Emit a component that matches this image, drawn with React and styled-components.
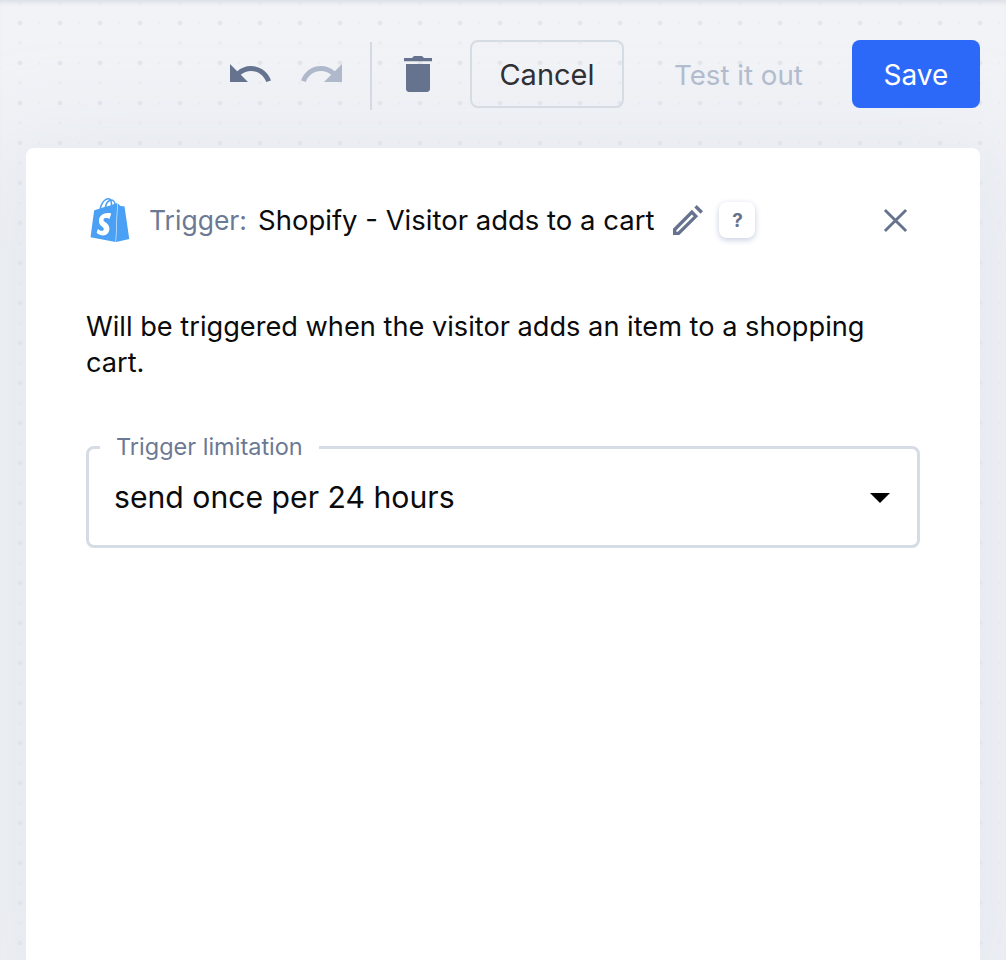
import React from "react";
import styled, { createGlobalStyle } from "styled-components";
import { SiShopify } from "react-icons/si";

const GlobalStyle = createGlobalStyle`
  html, body {
    margin: 0;
    padding: 0;
    height: 100%;
    overflow: hidden;
    background: #f1f3f7;
  }
  * {
    box-sizing: border-box;
  }
`;

const Page = styled.div`
  position: relative;
  height: 960px;
  overflow: hidden;
  display: flex;
  flex-direction: column;
  font-family: "Inter", "Liberation Sans", sans-serif;
  background-color: #f1f3f7;
  background-image:
    radial-gradient(circle at 20px 23px, #e2e5ea 0, #e2e5ea 1.5px, transparent 3px),
    radial-gradient(circle at 40px 23px, #ebedf1 0, #ebedf1 1px, transparent 2.5px),
    radial-gradient(circle at 20px 3px, #ebedf1 0, #ebedf1 1px, transparent 2.5px);
  background-size: 40px 40px;
  box-shadow: inset 0 5px 5px -3px #d8dbe3;
`;

const Toolbar = styled.div`
  position: relative;
  z-index: 1;
  display: flex;
  align-items: center;
  justify-content: flex-end;
  height: 148px;
  padding-right: 26px;
  flex-shrink: 0;
`;

const IconButton = styled.button`
  display: flex;
  align-items: center;
  justify-content: center;
  padding: 0;
  border: none;
  background: none;
  color: ${(p) => (p.$muted ? "#b0b9cb" : "#66738f")};
  margin-right: ${(p) => p.$gap || 0}px;
`;

const Divider = styled.div`
  width: 2px;
  height: 68px;
  margin: 4px 32px 0 24px;
  background: #d3dae4;
`;

const OutlineButton = styled.button`
  width: 154px;
  height: 68px;
  margin-left: 38px;
  border: 2px solid #d5dce3;
  border-radius: 8px;
  background: transparent;
  color: #2f3033;
  font: 400 29px "Inter", sans-serif;
`;

const GhostButton = styled.button`
  width: 128px;
  height: 68px;
  margin-left: 50px;
  padding: 2px 0 0;
  border: none;
  background: none;
  color: #b2bccd;
  font: 400 27.7px "Inter", sans-serif;
  white-space: nowrap;
`;

const SaveButton = styled.button`
  width: 128px;
  height: 68px;
  margin-left: 50px;
  padding: 2px 0 0;
  border: none;
  border-radius: 8px;
  background: #2d69f8;
  color: #fff;
  font: 400 28px "Inter", sans-serif;
`;

const Card = styled.div`
  flex: 1;
  margin: 0 26px;
  padding: 48px 60px 0;
  background: #fff;
  border-radius: 8px 8px 0 0;
  box-shadow: 0 24px 90px 30px #dfe3ebb0;
`;

const Header = styled.div`
  display: flex;
  align-items: center;
  height: 48px;
`;

const Logo = styled.div`
  display: flex;
  color: #4aa0f4;
  margin: 0 17px 0 2px;
`;

const Label = styled.span`
  font-size: 26.5px;
  color: #6c7994;
  margin-right: 11px;
`;

const Title = styled.span`
  font-size: 27.5px;
  color: #0b0b0c;
  margin-right: 18px;
  white-space: nowrap;
`;

const HelpBadge = styled.div`
  display: flex;
  align-items: center;
  justify-content: center;
  width: 36px;
  height: 36px;
  margin-left: 16px;
  border-radius: 8px;
  background: #fff;
  box-shadow: 0 2px 6px #c8cde0;
  color: #66738f;
  font: 700 19px "Inter", sans-serif;
`;

const CloseButton = styled.button`
  display: flex;
  margin-left: auto;
  margin-right: 12px;
  padding: 0;
  border: none;
  background: none;
  color: #66738f;
`;

const Description = styled.p`
  margin: 65px 0 0;
  font-size: 27.2px;
  line-height: 36px;
  color: #0b0b0c;
`;

const Field = styled.fieldset`
  position: relative;
  margin: 52px 0 0;
  padding: 0 28px;
  height: 115px;
  border: 3px solid #d5dce6;
  border-radius: 8px;
`;

const Legend = styled.legend`
  margin-left: -17px;
  padding: 0 16px;
  font-size: 23.5px;
  line-height: 28px;
  color: #6c7994;
`;

const Value = styled.div`
  font-size: 30.2px;
  line-height: 40px;
  margin-top: 16px;
  margin-left: -3px;
  color: #0b0b0c;
`;

const Caret = styled.span`
  position: absolute;
  right: 27px;
  top: 32px;
  border-left: 10px solid transparent;
  border-right: 10px solid transparent;
  border-top: 10px solid #000;
`;

const UndoIcon = ({ flip }) => (
  <svg width="48" height="48" viewBox="0 0 24 24" fill="currentColor" style={flip ? { transform: "scaleX(-1)" } : undefined}>
    <path d="M12.5 8c-2.65 0-5.05.99-6.9 2.6L2 7v9h9l-3.62-3.62c1.39-1.16 3.16-1.88 5.12-1.88 3.54 0 6.55 2.31 7.6 5.5l2.37-.78C21.08 11.03 17.15 8 12.5 8z" />
  </svg>
);

const TrashIcon = () => (
  <svg width="28" height="36" viewBox="5 3 14 18" fill="currentColor">
    <path d="M6 19.5c0 .8.7 1.5 1.5 1.5h9c.8 0 1.5-.7 1.5-1.5V7H6zM19 4h-4l-1-1h-4L9 4H5v1.6h14z" />
  </svg>
);

const PencilIcon = () => (
  <svg width="31" height="31" viewBox="0 0 32 32" fill="#66738f" fillRule="evenodd">
    <path d="M1 24.5 20.5 5l6.5 6.5L7.5 31H1zM4.5 26v1.5H6L22.3 11.5l-1.8-1.8z" />
    <path d="M23 2.5 25.5 0 32 6.5 29.5 9z" />
  </svg>
);

const CloseIcon = () => (
  <svg width="25" height="25" viewBox="0 0 26 26" fill="none" stroke="currentColor" strokeWidth="3">
    <path d="M2 2l22 22M24 2 2 24" />
  </svg>
);

const App = () => (
  <>
    <GlobalStyle />
    <Page>
      <Toolbar>
        <IconButton $gap={24}>
          <UndoIcon />
        </IconButton>
        <IconButton $muted>
          <UndoIcon flip />
        </IconButton>
        <Divider />
        <IconButton>
          <TrashIcon />
        </IconButton>
        <OutlineButton>Cancel</OutlineButton>
        <GhostButton>Test it out</GhostButton>
        <SaveButton>Save</SaveButton>
      </Toolbar>
      <Card>
        <Header>
          <Logo>
            <SiShopify size={44} />
          </Logo>
          <Label>Trigger:</Label>
          <Title>Shopify - Visitor adds to a cart</Title>
          <PencilIcon />
          <HelpBadge>?</HelpBadge>
          <CloseButton>
            <CloseIcon />
          </CloseButton>
        </Header>
        <Description>
          Will be triggered when the visitor adds an item to a shopping cart.
        </Description>
        <Field>
          <Legend>Trigger limitation</Legend>
          <Value>send once per 24 hours</Value>
          <Caret />
        </Field>
      </Card>
    </Page>
  </>
);

export default App;
